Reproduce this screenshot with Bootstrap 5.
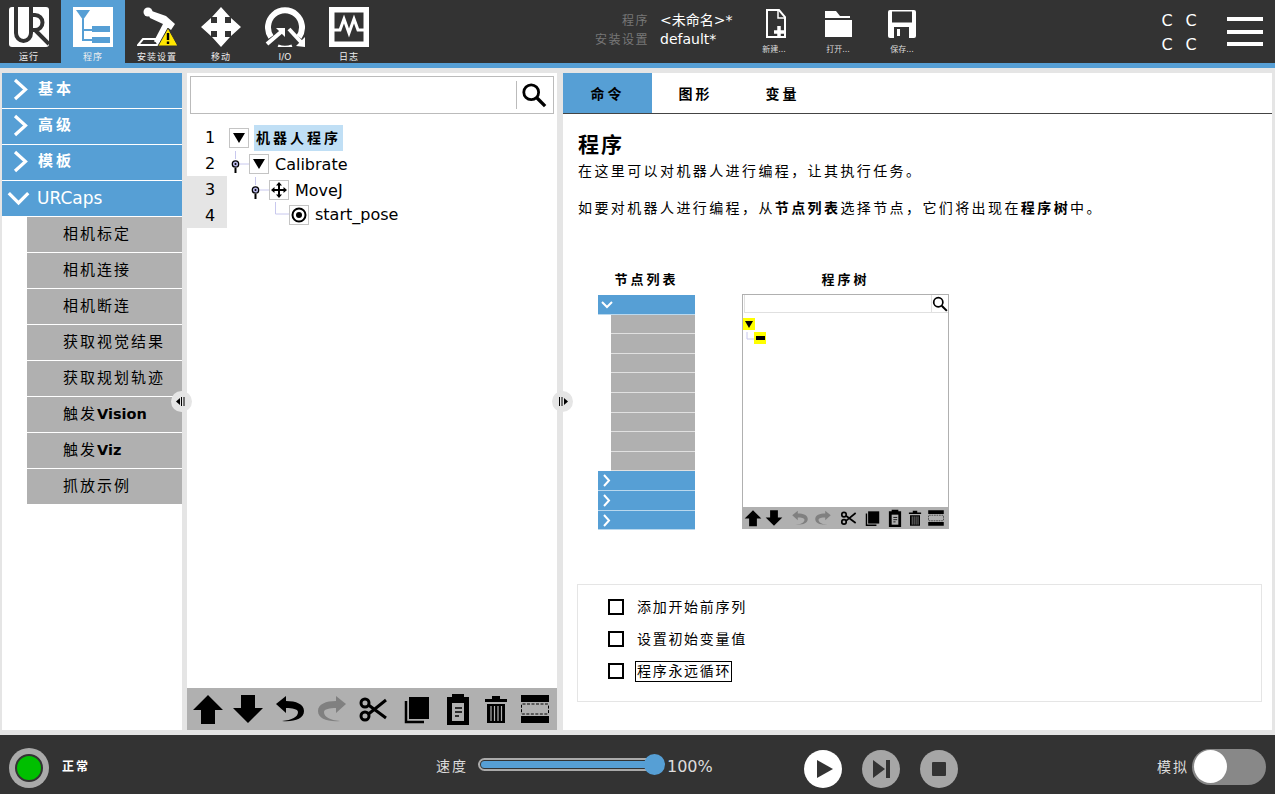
<!DOCTYPE html>
<html lang="zh">
<head>
  <meta charset="UTF-8" />
  <meta name="viewport" content="width=device-width, initial-scale=1" />
  <title>PolyScope 程序</title>
  <link href="https://cdn.jsdelivr.net/npm/bootstrap@5.3.0/dist/css/bootstrap.min.css" rel="stylesheet" />
  <style>
    :root { --ur-blue: #569fd5; --ur-dark: #333333; --ur-gray: #e5e5e5; --ur-mid: #b0b0b0; }
    html, body { height: 100%; overflow: hidden; }
    body {
      width: 1275px; height: 794px; background: var(--ur-gray); color: #000;
      font-family: "DejaVu Sans", "Noto Sans CJK SC", sans-serif; font-size: 15px;
    }
    .cjk { letter-spacing: 2px; }

    /* top bar */
    .top-bar { height: 68px; background: var(--ur-dark); border-bottom: 5px solid var(--ur-blue); color: #fff; }
    .top-bar > * { flex: none; }
    .top-tab { width: 64px; height: 63px; padding-top: 7px; font-size: 9px; line-height: 11px; letter-spacing: 1px; color: #eee; }
    .top-tab:first-child { width: 61px; padding-right: 3px; }
    .top-tab svg { display: block; margin: 0 auto 5px; width: 40px; height: 40px; }
    .top-tab.on { background: var(--ur-blue); }
    .file-info { width: 125px; margin-left: 143px; font-size: 12px; color: #777; line-height: 19px; text-align: right; padding-top: 12px; letter-spacing: 1.5px; }
    .file-name { width: 82px; margin-left: 11px; font-size: 14px; line-height: 19px; color: #fff; padding-top: 11px; }
    .file-btn { width: 64px; padding-top: 9px; font-size: 8px; line-height: 11px; color: #ddd; }
    .file-btn svg { display: block; margin: 0 auto 5px; width: 30px; height: 30px; }
    .cc-grid { width: 48px; margin-left: 221px; font-size: 16px; line-height: 24px; padding-top: 9px; display: grid; grid-template-columns: 24px 24px; align-content: start; text-align: center; }
    .burger { margin-left: 24px; padding-top: 17px; width: 36px; }
    .burger i { display: block; height: 4px; background: #fff; margin-bottom: 8.5px; }

    /* panels */
    .work-area { height: 667px; padding: 5px 3px 5px 2px; gap: 5px; position: relative; }
    .side-panel { width: 180px; background: #fff; }
    .tree-panel { width: 370px; background: #fff; }
    .info-panel { width: 709px; margin-left: 1px; background: #fff; }

    .cat-row { height: 35px; margin-bottom: 1px; background: var(--ur-blue); color: #fff; font-weight: bold; font-size: 15px; letter-spacing: 3px; padding-bottom: 2px; }
    .cat-row svg { width: 36px; height: 35px; flex: none; }
    .caps-row { font-size: 17px; font-weight: normal; letter-spacing: 0; padding-bottom: 0; }
    .caps-row svg { width: 35px; }
    .sub-row { height: 35px; margin: 0 0 1px 25px; padding-left: 36px; background: var(--ur-mid); font-size: 15px; }
    .sub-row b { letter-spacing: 0; font-size: 14.5px; }

    .search-box { margin: 3px 3px 0; height: 38px; border: 1px solid #bbb; padding-right: 6px; }
    .search-box span { display: block; width: 1px; height: 28px; margin-right: 4px; background: #bbb; }
    .tree-rows { margin-top: 10px; }
    .line-col { width: 40px; margin-right: 2px; }
    .line-no { height: 26px; padding: 2px 0 0 6px; font-size: 16px; }
    .line-no.dim { background: var(--ur-gray); }
    .node-col { padding-top: 1px; }
    .tree-row { height: 26px; }
    .tree-row.tight { height: 25px; }
    .node-box { width: 20px; height: 20px; flex: none; border: 1px solid #c4c4c4; }
    .indent-1 { width: 20px; flex: none; }
    .link-mark { width: 20px; height: 26px; flex: none; }
    .node-name { margin-left: 6px; font-size: 16px; }
    .node-name.low { padding-top: 2px; }
    .node-root { margin: -1px 0 0 5px; padding: 0 2px; height: 26px; line-height: 26px; background: #c0dff5; font-weight: bold; font-size: 14px; letter-spacing: 3px; }
    .edit-bar { height: 42px; background: var(--ur-mid); padding: 0 3px; }
    .edit-bar svg { width: 36px; height: 36px; flex: none; margin-left: 6px; }
    .edit-bar svg:nth-child(1) { margin-left: 0; }
    .edit-bar svg:nth-child(2) { margin-left: 4px; }
    .edit-bar svg:nth-child(8) { margin-left: 2px; }
    .edit-bar svg:nth-child(9) { margin-left: 3px; }

    .tab-bar { height: 41px; border-bottom: 1px solid #444; }
    .tab-item { width: 87px; padding-top: 2px; font-weight: bold; font-size: 14px; letter-spacing: 3px; }
    .tab-item.on { width: 89px; background: var(--ur-blue); }
    .info-body { padding: 16px 15px 0 15px; }
    .info-title { font-size: 21px; font-weight: bold; line-height: 30px; margin: 0 0 1px; letter-spacing: 2px; }
    .info-text { font-size: 14px; line-height: 20px; letter-spacing: 2.4px; margin: 0 0 17px; }
    .demo-wrap { margin: 52px 0 0 20px; height: 258px; }
    .demo-list { width: 97px; }
    .demo-head { font-weight: bold; font-size: 13px; letter-spacing: 3px; line-height: 20px; height: 25px; text-align: center; }
    .demo-cat { height: 19.6px; border-bottom: 1px solid #b9d8ee; background: var(--ur-blue); }
    .demo-cat svg { display: block; width: 18px; height: 19px; }
    .demo-sub { height: 19.6px; margin-left: 13px; border-bottom: 1px solid #e0e0e0; background: var(--ur-mid); }
    .demo-tree { width: 207px; margin-left: 47px; }
    .demo-frame { height: 235px; border: 1px solid var(--ur-mid); border-bottom: 0; margin-top: -1px; }
    .demo-search { height: 18px; margin-left: 1px; border: 1px solid #e0e0e0; border-top: 0; border-right: 0; }
    .demo-search span { display: block; width: 1px; height: 17px; margin-left: auto; background: #e0e0e0; }
    .demo-search svg { width: 16px; height: 16px; flex: none; }
    .demo-nodes { padding-top: 5px; }
    .yellow-node { width: 12px; height: 12px; flex: none; background: #ffff00; }
    .yellow-link { width: 11px; height: 12px; flex: none; }
    .demo-bar { height: 22px; background: var(--ur-mid); margin: 0 -1px; padding-left: 1px; }
    .demo-bar svg { width: 20px; height: 20px; flex: none; }
    .demo-bar svg:nth-child(2) { margin-left: 1px; }
    .demo-bar svg:nth-child(3), .demo-bar svg:nth-child(5) { margin-left: 6px; }
    .demo-bar svg:nth-child(4), .demo-bar svg:nth-child(6), .demo-bar svg:nth-child(7) { margin-left: 3px; }
    .demo-bar svg:nth-child(9) { margin-left: 1px; }
    .option-box { margin: 56px 0 0 -1px; width: 685px; height: 118px; border: 1px solid var(--ur-gray); padding: 6px 0 0 30px; }
    .option-row { height: 32px; font-size: 14px; letter-spacing: 1.7px; }
    .tick-box { width: 16px; height: 16px; border: 2px solid #000; margin-right: 13px; flex: none; }
    .focus-text { border: 1px solid #000; margin-left: -2px; padding: 0 0 0 1px; line-height: 19px; }

    .grip { position: absolute; top: 323px; width: 21px; height: 21px; border-radius: 50%; background: var(--ur-gray); }
    .grip svg { display: block; width: 21px; height: 21px; }

    /* footer */
    .foot-bar { height: 59px; background: var(--ur-dark); color: #ddd; }
    .foot-bar > * { flex: none; }
    .power-ring { width: 40px; height: 40px; margin: 7px 0 0 9px; border-radius: 50%; background: #aaa; }
    .power-ring i { display: block; width: 28px; height: 28px; border-radius: 50%; background: #00bf00; border: 2px solid #333; }
    .status-text { width: 100px; margin: 5px 0 0 13px; font-size: 12px; font-weight: bold; letter-spacing: 2px; color: #fff; }
    .speed-label { margin: 3px 0 0 274px; width: 42px; font-size: 14px; letter-spacing: 2px; }
    .speed-track { width: 176px; height: 13px; border: 2px solid #aaa; border-radius: 7px; padding: 1px; position: relative; }
    .speed-track i { display: block; height: 7px; background: var(--ur-blue); border-radius: 4px; }
    .speed-track b { position: absolute; right: -13px; top: -6px; width: 21px; height: 21px; border-radius: 50%; background: var(--ur-blue); }
    .speed-val { margin: 4px 0 0 13px; width: 137px; font-size: 16px; }
    .run-btn { width: 38px; height: 38px; margin: 9px 20px 0 0; border-radius: 50%; background: #a6a6a6; }
    .run-btn.on { background: #fff; }
    .run-btn svg { width: 38px; height: 38px; display: block; }
    .sim-label { margin: 5px 0 0 199px; font-size: 14px; letter-spacing: 2px; width: 35px; }
    .sim-switch { width: 74px; height: 36px; margin-top: 5px; border-radius: 18px; background: #888; padding: 1px 2px; }
    .sim-switch i { display: block; width: 33px; height: 33px; border-radius: 50%; background: #fff; }
  </style>
</head>
<body>

<svg width="0" height="0" class="position-absolute">
  <symbol id="i-up" viewBox="0 0 36 36"><path d="M18 4 33 19H25V33H11V19H3Z" fill="currentColor"/></symbol>
  <symbol id="i-down" viewBox="0 0 36 36"><path d="M18 32 33 17H25V4H11V17H3Z" fill="currentColor"/></symbol>
  <symbol id="i-undo" viewBox="0 0 36 36"><path d="M4 13 14 5V10C24 10 32 13 32 20C32 28 22 31 10 30C20 29 26 26 26 21C26 18 20 17 14 17V22Z" fill="currentColor"/></symbol>
  <symbol id="i-redo" viewBox="0 0 36 36"><path d="M32 13 22 5V10C12 10 4 13 4 20C4 28 14 31 26 30C16 29 10 26 10 21C10 18 16 17 22 17V22Z" fill="currentColor"/></symbol>
  <symbol id="i-cut" viewBox="0 0 36 36"><g fill="none" stroke="currentColor" stroke-width="3"><circle cx="9" cy="12" r="4"/><circle cx="9" cy="25" r="4"/><path d="M12.500 14 30 27M12.500 23 30 9"/></g></symbol>
  <symbol id="i-copy" viewBox="0 0 36 36"><path d="M11 6H31V28H11Z" fill="currentColor"/><path d="M8 10V31H26" fill="none" stroke="currentColor" stroke-width="2.500"/></symbol>
  <symbol id="i-paste" viewBox="0 0 36 36"><path d="M7 6H12V3H24V6H29V34H7Z" fill="currentColor"/><path d="M12 12H24V30H12Z" fill="#b0b0b0"/><path d="M15 17H22M15 21H22M15 25H19" stroke="#000" stroke-width="1.500"/></symbol>
  <symbol id="i-trash" viewBox="0 0 36 36"><path d="M7 8H14V5H22V8H29V11H7ZM9 13H27V32H9Z" fill="currentColor"/><path d="M13 15V30M16.500 15V30M20 15V30M23.500 15V30" stroke="#b0b0b0" stroke-width="1.200"/></symbol>
  <symbol id="i-suppress" viewBox="0 0 36 36"><path d="M4 4H32V11H4ZM4 25H32V32H4Z" fill="currentColor"/><rect x="4.500" y="13" width="27" height="10" rx="1" fill="none" stroke="currentColor" stroke-dasharray="3 1.500"/></symbol>
  <symbol id="i-search" viewBox="0 0 28 28"><circle cx="11" cy="11" r="8" fill="none" stroke="currentColor" stroke-width="3"/><path d="M17 17 26 26" stroke="currentColor" stroke-width="3.600"/></symbol>
</svg>

<header class="top-bar d-flex">
  <div class="top-tab text-center">
    <svg viewBox="0 0 40 40"><rect width="40" height="40" rx="3" fill="#fff"/><path d="M7 0V26A7.500 8 0 0 0 22 26V0M22 8H26A7.500 7.500 0 0 1 26 23H22M26 23 40 37" fill="none" stroke="#333" stroke-width="4"/></svg>
    运行
  </div>
  <div class="top-tab on text-center">
    <svg viewBox="0 0 40 40"><rect width="40" height="40" fill="#fff"/><path d="M3 3H17L10 13Z" fill="#569fd5"/><path d="M10 12V33H19M10 23H19" fill="none" stroke="#569fd5" stroke-width="2"/><path d="M19 19H37V25H19ZM19 30H37V36H19Z" fill="#569fd5"/></svg>
    程序
  </div>
  <div class="top-tab text-center">
    <svg viewBox="0 0 40 40"><path d="M9 2 29 9 38 17 34 23 26 17 13 11Z" fill="#fff"/><path d="M30 17 20 36" stroke="#fff" stroke-width="7"/><circle cx="11" cy="5" r="4.500" fill="#fff"/><path d="M6 32H19L21 38H1Z" fill="none" stroke="#fff" stroke-width="2"/><path d="M31 21 41 39H21Z" fill="#ffe600" stroke="#333"/><path d="M31 26V33M31 34.500V37" stroke="#000" stroke-width="2.400"/></svg>
    安装设置
  </div>
  <div class="top-tab text-center">
    <svg viewBox="0 0 40 40"><path d="M20 0 29 10H24V16H30V11L40 20 30 29V24H24V30H29L20 40 11 30H16V24H10V29L0 20 10 11V16H16V10H11Z" fill="#fff"/></svg>
    移动
  </div>
  <div class="top-tab text-center" style="letter-spacing:0">
    <svg viewBox="0 0 40 40"><path d="M6 30A17 17 0 1 1 34 30" fill="none" stroke="#fff" stroke-width="6"/><path d="M13 39A20 20 0 0 0 27 39" fill="none" stroke="#fff" stroke-width="3"/><path d="M2 37 16 25" stroke="#fff" stroke-width="4"/><path d="M11 21H20V30Z" fill="#fff"/><path d="M24 22 36 35" stroke="#fff" stroke-width="4"/><path d="M40 40V30L31 39Z" fill="#fff"/></svg>
    I/O
  </div>
  <div class="top-tab text-center">
    <svg viewBox="0 0 40 40"><rect x="2.750" y="2.750" width="34.500" height="34.500" fill="#333" stroke="#fff" stroke-width="5.500"/><path d="M5 23H11L15 12 20 26 25 12 29 23H35" fill="none" stroke="#fff" stroke-width="3"/></svg>
    日志
  </div>
  <div class="file-info">程序<br />安装设置</div>
  <div class="file-name">&lt;未命名&gt;*<br />default*</div>
  <div class="file-btn text-center">
    <svg viewBox="0 0 30 30"><path d="M8 1H20L26 8V28H8Z" fill="none" stroke="#fff" stroke-width="2"/><path d="M19 1V9H26" fill="none" stroke="#fff" stroke-width="1.500"/><path d="M20 17V28M15 23H27" stroke="#fff" stroke-width="3.500"/></svg>
    新建...
  </div>
  <div class="file-btn text-center">
    <svg viewBox="0 0 30 30"><path d="M2 2H13L17 7H27V9H2ZM2 11H29V28H2Z" fill="#fff"/></svg>
    打开...
  </div>
  <div class="file-btn text-center">
    <svg viewBox="0 0 30 30"><rect x="1" y="1" width="28" height="28" rx="2" fill="#fff"/><rect x="5" y="2.500" width="20" height="11" fill="#333"/><rect x="7" y="18" width="15" height="11" fill="#333"/><rect x="10" y="20" width="3" height="7" fill="#fff"/></svg>
    保存...
  </div>
  <div class="cc-grid"><span>C</span><span>C</span><span>C</span><span>C</span></div>
  <div class="burger"><i></i><i></i><i></i></div>
</header>

<main class="work-area d-flex">
  <nav class="side-panel">
    <div class="cat-row d-flex align-items-center"><svg viewBox="0 0 36 35"><path d="M13 8 23.500 17.500 13 27" fill="none" stroke="#fff" stroke-width="3.200"/></svg>基本</div>
    <div class="cat-row d-flex align-items-center"><svg viewBox="0 0 36 35"><path d="M13 8 23.500 17.500 13 27" fill="none" stroke="#fff" stroke-width="3.200"/></svg>高级</div>
    <div class="cat-row d-flex align-items-center"><svg viewBox="0 0 36 35"><path d="M13 8 23.500 17.500 13 27" fill="none" stroke="#fff" stroke-width="3.200"/></svg>模板</div>
    <div class="cat-row caps-row d-flex align-items-center"><svg viewBox="0 0 36 35"><path d="M7 12 17 22 27 12" fill="none" stroke="#fff" stroke-width="3.400"/></svg>URCaps</div>
    <div class="sub-row cjk d-flex align-items-center">相机标定</div>
    <div class="sub-row cjk d-flex align-items-center">相机连接</div>
    <div class="sub-row cjk d-flex align-items-center">相机断连</div>
    <div class="sub-row cjk d-flex align-items-center">获取视觉结果</div>
    <div class="sub-row cjk d-flex align-items-center">获取规划轨迹</div>
    <div class="sub-row cjk d-flex align-items-center">触发<b>Vision</b></div>
    <div class="sub-row cjk d-flex align-items-center">触发<b>Viz</b></div>
    <div class="sub-row cjk d-flex align-items-center">抓放示例</div>
  </nav>

  <section class="tree-panel d-flex flex-column">
    <div class="search-box d-flex align-items-center justify-content-end">
      <span></span>
      <svg width="26" height="26"><use href="#i-search"/></svg>
    </div>
    <div class="tree-rows flex-grow-1 d-flex">
      <div class="line-col flex-none">
        <div class="line-no text-center">1</div>
        <div class="line-no text-center">2</div>
        <div class="line-no dim text-center">3</div>
        <div class="line-no dim text-center">4</div>
      </div>
      <div class="node-col">
        <div class="tree-row d-flex align-items-center">
          <div class="node-box d-flex align-items-center justify-content-center"><svg width="12" height="10"><path d="M0 0H12L6 10Z"/></svg></div>
          <div class="node-root">机器人程序</div>
        </div>
        <div class="tree-row d-flex align-items-center">
          <svg class="link-mark" viewBox="0 0 20 26"><path d="M6.500 0V8M11 13H20" stroke="#c8c8ee" fill="none"/><path d="M6.500 17V22" stroke="#000" stroke-width="2"/><circle cx="6.500" cy="13" r="3.200" fill="#b8b8e8" stroke="#000" stroke-width="1.300"/><circle cx="6.500" cy="13" r="1" fill="#000"/></svg>
          <div class="node-box d-flex align-items-center justify-content-center"><svg width="12" height="10"><path d="M0 0H12L6 10Z"/></svg></div>
          <div class="node-name low">Calibrate</div>
        </div>
        <div class="tree-row tight d-flex align-items-center">
          <div class="indent-1"></div>
          <svg class="link-mark" viewBox="0 0 20 26"><path d="M6.500 0V8M11 13H20" stroke="#c8c8ee" fill="none"/><path d="M6.500 17V22" stroke="#000" stroke-width="2"/><circle cx="6.500" cy="13" r="3.200" fill="#b8b8e8" stroke="#000" stroke-width="1.300"/><circle cx="6.500" cy="13" r="1" fill="#000"/></svg>
          <div class="node-box d-flex align-items-center justify-content-center"><svg width="16" height="16" viewBox="0 0 16 16"><path d="M8 0 11 3.500H9V7H12.500V5L16 8 12.500 11V9H9V12.500H11L8 16 5 12.500H7V9H3.500V11L0 8 3.500 5V7H7V3.500H5Z"/></svg></div>
          <div class="node-name low">MoveJ</div>
        </div>
        <div class="tree-row tight d-flex align-items-center">
          <div class="indent-1"></div>
          <div class="indent-1"></div>
          <svg class="link-mark" viewBox="0 0 20 26"><path d="M6.500 0V12H20" stroke="#c8c8ee" fill="none"/></svg>
          <div class="node-box d-flex align-items-center justify-content-center"><svg width="16" height="16" viewBox="0 0 16 16"><circle cx="8" cy="8" r="6.500" fill="none" stroke="#000" stroke-width="2"/><circle cx="8" cy="8" r="3"/></svg></div>
          <div class="node-name">start_pose</div>
        </div>
      </div>
    </div>
    <div class="edit-bar d-flex align-items-center">
      <svg><use href="#i-up"/></svg>
      <svg><use href="#i-down"/></svg>
      <svg><use href="#i-undo"/></svg>
      <svg style="color:#808080"><use href="#i-redo"/></svg>
      <svg><use href="#i-cut"/></svg>
      <svg><use href="#i-copy"/></svg>
      <svg><use href="#i-paste"/></svg>
      <svg><use href="#i-trash"/></svg>
      <svg><use href="#i-suppress"/></svg>
    </div>
  </section>

  <section class="info-panel d-flex flex-column">
    <div class="tab-bar d-flex">
      <div class="tab-item on d-flex align-items-center justify-content-center">命令</div>
      <div class="tab-item d-flex align-items-center justify-content-center">图形</div>
      <div class="tab-item d-flex align-items-center justify-content-center">变量</div>
    </div>
    <div class="info-body">
      <h1 class="info-title">程序</h1>
      <p class="info-text">在这里可以对机器人进行编程，让其执行任务。</p>
      <p class="info-text">如要对机器人进行编程，从<b>节点列表</b>选择节点，它们将出现在<b>程序树</b>中。</p>
      <div class="demo-wrap d-flex">
        <div class="demo-list">
          <div class="demo-head">节点列表</div>
          <div class="demo-cat"><svg viewBox="0 0 18 19"><path d="M4 7 9 12 14 7" fill="none" stroke="#fff" stroke-width="2"/></svg></div>
          <div class="demo-sub"></div><div class="demo-sub"></div><div class="demo-sub"></div><div class="demo-sub"></div>
          <div class="demo-sub"></div><div class="demo-sub"></div><div class="demo-sub"></div><div class="demo-sub"></div>
          <div class="demo-cat"><svg viewBox="0 0 18 19"><path d="M6 4 11 9.500 6 15" fill="none" stroke="#fff" stroke-width="2"/></svg></div>
          <div class="demo-cat"><svg viewBox="0 0 18 19"><path d="M6 4 11 9.500 6 15" fill="none" stroke="#fff" stroke-width="2"/></svg></div>
          <div class="demo-cat"><svg viewBox="0 0 18 19"><path d="M6 4 11 9.500 6 15" fill="none" stroke="#fff" stroke-width="2"/></svg></div>
        </div>
        <div class="demo-tree">
          <div class="demo-head">程序树</div>
          <div class="demo-frame d-flex flex-column">
            <div class="demo-search d-flex align-items-center"><span></span><svg><use href="#i-search"/></svg></div>
            <div class="demo-nodes flex-grow-1">
              <div class="yellow-node d-flex align-items-center justify-content-center"><svg width="8" height="7"><path d="M0 0H8L4 7Z"/></svg></div>
              <div class="d-flex" style="margin-top:2px">
                <svg class="yellow-link"><path d="M4 0V7H11" stroke="#c8c8ee" fill="none"/></svg>
                <div class="yellow-node d-flex align-items-center justify-content-center"><svg width="9" height="4"><rect width="9" height="4"/></svg></div>
              </div>
            </div>
            <div class="demo-bar d-flex align-items-center">
              <svg><use href="#i-up"/></svg>
              <svg><use href="#i-down"/></svg>
              <svg style="color:#808080"><use href="#i-undo"/></svg>
              <svg style="color:#808080"><use href="#i-redo"/></svg>
              <svg><use href="#i-cut"/></svg>
              <svg><use href="#i-copy"/></svg>
              <svg><use href="#i-paste"/></svg>
              <svg><use href="#i-trash"/></svg>
              <svg><use href="#i-suppress"/></svg>
            </div>
          </div>
        </div>
      </div>
      <div class="option-box">
        <div class="option-row d-flex align-items-center"><span class="tick-box"></span>添加开始前序列</div>
        <div class="option-row d-flex align-items-center"><span class="tick-box"></span>设置初始变量值</div>
        <div class="option-row d-flex align-items-center"><span class="tick-box"></span><span class="focus-text">程序永远循环</span></div>
      </div>
    </div>
  </section>

  <div class="grip" style="left:171px"><svg viewBox="0 0 21 21"><path d="M9 7 5 10.500 9 14Z" fill="#000"/><path d="M10.500 6V15M13 6V15" stroke="#000"/></svg></div>
  <div class="grip" style="left:552px"><svg viewBox="0 0 21 21"><path d="M12 7 16 10.500 12 14Z" fill="#000"/><path d="M7.500 6V15M10 6V15" stroke="#000"/></svg></div>
</main>

<footer class="foot-bar d-flex align-items-center">
  <div class="power-ring d-flex align-items-center justify-content-center"><i></i></div>
  <div class="status-text">正常</div>
  <div class="speed-label">速度</div>
  <div class="speed-track"><i></i><b></b></div>
  <div class="speed-val">100%</div>
  <div class="run-btn on"><svg viewBox="0 0 38 38"><path d="M13 10 29 19 13 28Z" fill="#333"/></svg></div>
  <div class="run-btn"><svg viewBox="0 0 38 38"><path d="M11 10 23 19 11 28Z M24 10H28V28H24Z" fill="#333"/></svg></div>
  <div class="run-btn" style="margin-right:0"><svg viewBox="0 0 38 38"><rect x="12" y="12" width="14" height="14" rx="1" fill="#333"/></svg></div>
  <div class="sim-label">模拟</div>
  <div class="sim-switch"><i></i></div>
</footer>

<script src="https://cdn.jsdelivr.net/npm/bootstrap@5.3.0/dist/js/bootstrap.bundle.min.js"></script>
</body>
</html>
